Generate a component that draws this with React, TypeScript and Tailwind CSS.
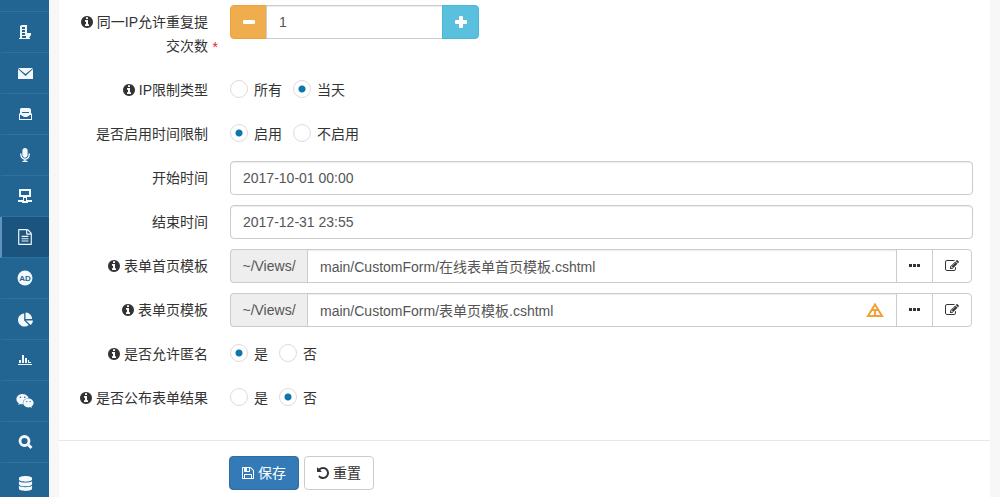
import { ReactNode } from "react";
import { FaChartPie, FaDatabase, FaMicrophone, FaWeixin } from "react-icons/fa";

const faPaths = {
  info: "M1152 1376v-160q0-14-9-23t-23-9h-96v-512q0-14-9-23t-23-9h-320q-14 0-23 9t-9 23v160q0 14 9 23t23 9h96v320h-96q-14 0-23 9t-9 23v160q0 14 9 23t23 9h448q14 0 23-9t9-23zm-128-896v-160q0-14-9-23t-23-9h-192q-14 0-23 9t-9 23v160q0 14 9 23t23 9h192q14 0 23-9t9-23zm640 416q0 209-103 385.5t-279.5 279.5-385.5 103-385.5-103-279.5-279.5-103-385.5 103-385.5 279.5-279.5 385.5-103 385.5 103 279.5 279.5 103 385.5z",
  save: "M512 1536h768v-384h-768v384zm896 0h128v-896q0-14-10-38.5t-20-34.5l-281-281q-10-10-34-20t-39-10v416q0 40-28 68t-68 28h-576q-40 0-68-28t-28-68v-416h-128v1280h128v-416q0-40 28-68t68-28h832q40 0 68 28t28 68v416zm-384-928v-320q0-13-9.5-22.5t-22.5-9.5h-192q-13 0-22.5 9.5t-9.5 22.5v320q0 13 9.5 22.5t22.5 9.5h192q13 0 22.5-9.5t9.5-22.5zm640 32v928q0 40-28 68t-68 28h-1344q-40 0-68-28t-28-68v-1344q0-40 28-68t68-28h928q40 0 88 20t76 48l280 280q28 28 48 76t20 88z",
  edit: "M888 1184l116-116-152-152-116 116v56h96v96h56zm440-720q-16-16-33 1l-350 350q-17 17-1 33t33-1l350-350q17-17 1-33zm80 594v190q0 119-84.5 203.5t-203.5 84.5h-832q-119 0-203.5-84.5t-84.5-203.5v-832q0-119 84.5-203.5t203.5-84.5h832q63 0 117 25 15 7 18 23 3 17-9 29l-49 49q-14 14-32 8-23-6-45-6h-832q-66 0-113 47t-47 113v832q0 66 47 113t113 47h832q66 0 113-47t47-113v-126q0-13 9-22l64-64q15-15 35-7t20 29zm-96-738l288 288-672 672h-288v-288zm444 132l-92 92-288-288 92-92q28-28 68-28t68 28l152 152q28 28 28 68t-28 68z",
  undo: "M1664 896q0 156-61 298t-164 245-245 164-298 61q-172 0-327-72.5t-264-204.5q-7-10-6.5-22.5t8.5-20.5l137-138q10-9 25-9 16 2 23 12 73 95 179 147t225 52q104 0 198.5-40.5t163.5-109.5 109.5-163.5 40.5-198.5-40.5-198.5-109.5-163.5-163.5-109.5-198.5-40.5q-98 0-188 35.5t-160 101.5l137 138q31 30 14 69-17 40-59 40h-448q-26 0-45-19t-19-45v-448q0-42 40-59 39-17 69 14l130 129q107-101 244.5-156.5t284.5-55.5q156 0 298 61t245 164 164 245 61 298z",
  file: "M1596 380q28 28 48 76t20 88v1152q0 40-28 68t-68 28h-1344q-40 0-68-28t-28-68v-1600q0-40 28-68t68-28h896q40 0 88 20t76 48zm-444-244v376h376q-10-29-22-41l-313-313q-12-12-41-22zm384 1528v-1024h-416q-40 0-68-28t-28-68v-416h-768v1536h1280zm-1024-864q0-14 9-23t23-9h704q14 0 23 9t9 23v64q0 14-9 23t-23 9h-704q-14 0-23-9t-9-23v-64zm736 224q14 0 23 9t9 23v64q0 14-9 23t-23 9h-704q-14 0-23-9t-9-23v-64q0-14 9-23t23-9h704zm0 256q14 0 23 9t9 23v64q0 14-9 23t-23 9h-704q-14 0-23-9t-9-23v-64q0-14 9-23t23-9h704z",
};

const FaIcon = ({
  name,
  className = "size-[14px]",
}: {
  name: keyof typeof faPaths;
  className?: string;
}) => (
  <svg
    viewBox="0 0 1792 1792"
    fill="currentColor"
    aria-hidden="true"
    className={`inline-block shrink-0 ${className}`}
  >
    <path d={faPaths[name]} />
  </svg>
);

const Glyph = ({ children }: { children: ReactNode }) => (
  <svg viewBox="0 0 16 16" fill="currentColor" aria-hidden="true" className="size-4">
    {children}
  </svg>
);

const navItems = [
  {
    title: "企业",
    icon: (
      <Glyph>
        <path
          fillRule="evenodd"
          d="M3 2l2-1h5v8h4v2l-2 3h1v1H2v-1h1zM5 3v2h3V3zM5 6v2h3V6zM5 9v2h3V9zM5 12v2h4v-2z"
        />
      </Glyph>
    ),
  },
  {
    title: "邮件",
    icon: (
      <Glyph>
        <path d="M1 3h15L8.500 9zM1 4l7.500 7L16 4v10H1z" />
      </Glyph>
    ),
  },
  {
    title: "收件箱",
    icon: (
      <Glyph>
        <path
          fillRule="evenodd"
          d="M4 2h8l2 1v4l1 1v6H2V8l1-1V3zM3 9v4h11V9h-1l-3 2H7L4 9z"
        />
        <path d="M5 6.500h7" stroke="#226593" strokeWidth="1" />
      </Glyph>
    ),
  },
  { title: "语音", icon: <FaMicrophone className="size-[14px]" /> },
  {
    title: "网络",
    icon: (
      <Glyph>
        <path
          fillRule="evenodd"
          d="M2 1h12v8h-4v3h5v2h-4v1H5v-1H1v-2h5V9H2zM4 3v4h8V3zM7 10v3h2v-3z"
        />
      </Glyph>
    ),
  },
  { title: "表单", icon: <FaIcon name="file" className="size-4" />, active: true },
  {
    title: "广告",
    icon: (
      <Glyph>
        <circle cx="8" cy="8" r="7.500" />
        <text
          x="8"
          y="11"
          textAnchor="middle"
          fontSize="8"
          fontWeight="bold"
          fill="#226593"
        >
          AD
        </text>
      </Glyph>
    ),
  },
  { title: "统计", icon: <FaChartPie className="size-[15px]" /> },
  {
    title: "报表",
    icon: (
      <Glyph>
        <path d="M1 12h14v1H1zM2 8h2v3H2zM5 3h2v8H5zM8 6h2v5H8zM11 8h1v3h-1zM12 10h2v1h-2z" />
      </Glyph>
    ),
  },
  { title: "微信", icon: <FaWeixin className="size-[18px]" /> },
  {
    title: "搜索",
    icon: (
      <Glyph>
        <circle cx="7.500" cy="7" r="4.500" fill="none" stroke="currentColor" strokeWidth="2.800" />
        <path d="M11 10.500l3.500 3.500" stroke="currentColor" strokeWidth="2.800" />
      </Glyph>
    ),
  },
  { title: "数据", icon: <FaDatabase className="size-[15px]" /> },
];

const Sidebar = () => (
  <nav className="w-[49px] shrink-0 bg-[#226593] text-[#f2f8fc]">
    <div className="h-3 border-b border-[#2f72a0]" />
    {navItems.map((item) => (
      <a
        key={item.title}
        href="#"
        title={item.title}
        className={`flex h-[41px] items-center justify-center border-b border-l-2 border-b-[#2f72a0] pr-px ${
          item.active ? "border-l-[#6294bb] bg-[#1b547e]" : "border-l-transparent"
        }`}
      >
        {item.icon}
      </a>
    ))}
  </nav>
);

type RowProps = {
  label: string;
  htmlFor?: string;
  info?: boolean;
  required?: boolean;
  children: ReactNode;
};

const FormRow = ({ label, htmlFor, info, required, children }: RowProps) => {
  const Label = htmlFor ? "label" : "div";
  return (
    <div className="flex items-start gap-[22px]">
      <Label
        htmlFor={htmlFor}
        id={htmlFor ? undefined : label}
        className="relative w-[130px] shrink-0 py-[5px] text-right leading-6"
      >
        {info && <FaIcon name="info" className="mr-[3px] size-[14px] align-[-2px]" />}
        {label}
        {required && (
          <span className="absolute -right-2.5 bottom-1 text-[#e02222]">*</span>
        )}
      </Label>
      <div className="min-w-0 flex-1">{children}</div>
    </div>
  );
};

const RadioRow = ({
  label,
  info,
  options,
  value,
}: {
  label: string;
  info?: boolean;
  options: string[];
  value: string;
}) => (
  <FormRow label={label} info={info}>
    <div role="radiogroup" aria-labelledby={label} className="flex gap-[11px] py-[5px]">
      {options.map((option) => (
        <label key={option} className="flex items-center gap-1.5 leading-6">
          <input
            type="radio"
            name={label}
            defaultChecked={option === value}
            className="mb-0.5 size-[18px] appearance-none rounded-full border border-[#dcdcdc] bg-white checked:bg-[radial-gradient(circle,#0e76ab_3px,transparent_4px)]"
          />
          {option}
        </label>
      ))}
    </div>
  </FormRow>
);

const inputClass =
  "h-[34px] w-full min-w-0 border border-[#ccc] bg-white px-3 text-[#555] shadow-[inset_0_1px_1px_rgba(0,0,0,0.075)] outline-none";

const TextRow = ({ id, label, value }: { id: string; label: string; value: string }) => (
  <FormRow label={label} htmlFor={id}>
    <input id={id} type="text" defaultValue={value} className={`${inputClass} rounded`} />
  </FormRow>
);

const TemplateRow = ({
  id,
  label,
  value,
  warning,
}: {
  id: string;
  label: string;
  value: string;
  warning?: boolean;
}) => (
  <FormRow label={label} htmlFor={id} info>
    <div className="flex pr-px">
      <span className="flex w-[77px] shrink-0 items-center justify-center rounded-l border border-r-0 border-[#ccc] bg-[#eee] text-[#555]">
        ~/Views/
      </span>
      <div className="relative min-w-0 flex-1">
        <input id={id} type="text" defaultValue={value} className={inputClass} />
        {warning && (
          <svg
            viewBox="0 0 18 16"
            className="absolute top-[9px] right-[13px] h-4 w-[18px]"
            fill="none"
            stroke="#f0a236"
            strokeWidth="2"
          >
            <path d="M9 2.500L16 14H2z" />
            <path d="M6 8h6M9 7v7" />
          </svg>
        )}
      </div>
      <button
        type="button"
        aria-label="选择"
        className="-ml-px flex w-[37px] items-center justify-center border border-[#ccc] bg-white"
      >
        <svg viewBox="0 0 12 4" fill="currentColor" className="h-1 w-3">
          <path d="M0 0h3v3H0zM4 0h3v3H4zM8 0h3v3H8z" />
        </svg>
      </button>
      <button
        type="button"
        aria-label="编辑"
        className="-ml-px flex w-10 items-center justify-center rounded-r border border-[#ccc] bg-white"
      >
        <FaIcon name="edit" />
      </button>
    </div>
  </FormRow>
);

const CountRow = () => (
  <FormRow label="同一IP允许重复提交次数" htmlFor="count" info required>
    <div className="flex w-[249px]">
      <button
        type="button"
        aria-label="减少"
        className="flex w-[37px] shrink-0 items-center justify-center rounded-l border border-[#eea236] bg-[#f0ad4e] text-white"
      >
        <svg viewBox="0 0 12 12" fill="currentColor" className="size-3">
          <rect y="4" width="12" height="4" rx="1" />
        </svg>
      </button>
      <input
        id="count"
        type="text"
        defaultValue="1"
        className={`${inputClass} -ml-px flex-1`}
      />
      <button
        type="button"
        aria-label="增加"
        className="-ml-px flex w-[37px] shrink-0 items-center justify-center rounded-r border border-[#46b8da] bg-[#5bc0de] text-white"
      >
        <svg viewBox="0 0 12 12" fill="currentColor" className="size-3">
          <rect y="4" width="12" height="4" rx="1" />
          <rect x="4" width="4" height="12" rx="1" />
        </svg>
      </button>
    </div>
  </FormRow>
);

const App = () => {
  return (
    <div className="flex h-screen overflow-hidden bg-[#f7f7f7] font-['Liberation_Sans','Noto_Sans_CJK_SC',sans-serif] text-[14px] text-[#333]">
      <Sidebar />
      <main className="mx-2.5 min-w-0 flex-1 bg-white">
        <form onSubmit={(e) => e.preventDefault()}>
          <div className="flex flex-col gap-2.5 pt-[5px] pr-[17px] pb-[25px] pl-[19px]">
            <CountRow />
            <RadioRow label="IP限制类型" info options={["所有", "当天"]} value="当天" />
            <RadioRow label="是否启用时间限制" options={["启用", "不启用"]} value="启用" />
            <TextRow id="start" label="开始时间" value="2017-10-01 00:00" />
            <TextRow id="end" label="结束时间" value="2017-12-31 23:55" />
            <TemplateRow
              id="index-template"
              label="表单首页模板"
              value="main/CustomForm/在线表单首页模板.cshtml"
            />
            <TemplateRow
              id="page-template"
              label="表单页模板"
              value="main/CustomForm/表单页模板.cshtml"
              warning
            />
            <RadioRow label="是否允许匿名" info options={["是", "否"]} value="是" />
            <RadioRow label="是否公布表单结果" info options={["是", "否"]} value="否" />
          </div>
          <div className="flex gap-[5px] border-t border-[#e7e7e7] pt-[15px] pl-[170px]">
            <button
              type="submit"
              className="flex h-[34px] w-[70px] items-center gap-[3px] rounded border border-[#2e6da4] bg-[#337ab7] px-[11px] text-white"
            >
              <FaIcon name="save" />
              保存
            </button>
            <button
              type="reset"
              className="flex h-[34px] w-[70px] items-center gap-[3px] rounded border border-[#ccc] bg-white px-[11px]"
            >
              <FaIcon name="undo" />
              重置
            </button>
          </div>
        </form>
      </main>
    </div>
  );
};

export default App;
